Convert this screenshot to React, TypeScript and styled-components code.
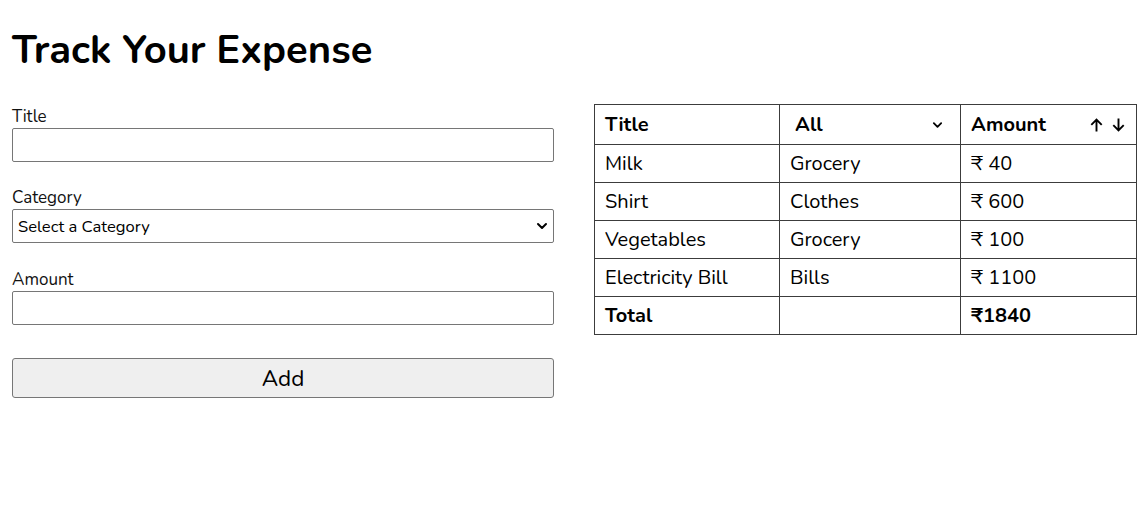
import React from "react";
import styled, { createGlobalStyle } from "styled-components";

const Global = createGlobalStyle`
  * { box-sizing: border-box; }
  body {
    margin: 0;
    background: #fff;
    color: #000;
    font-family: "Nunito", "Lato", "Noto Sans", sans-serif;
  }
`;

const Page = styled.main`
  padding: 0 11px 0 12px;
`;

const Heading = styled.h1`
  margin: 0;
  padding-top: 26px;
  font-size: 40px;
  line-height: 48px;
  font-weight: 700;
`;

const Columns = styled.div`
  display: grid;
  grid-template-columns: 542px 1fr;
  column-gap: 40px;
  margin-top: 30px;
  align-items: start;
`;

const Form = styled.form`
  display: flex;
  flex-direction: column;
`;

const Field = styled.div<{ $gap: number }>`
  display: flex;
  flex-direction: column;
  margin-bottom: ${(p) => p.$gap}px;
`;

const Label = styled.label`
  font-size: 17px;
  line-height: 22px;
  margin-top: 2px;
  color: #111;
`;

const TextInput = styled.input`
  height: 34px;
  border: 1px solid #767676;
  border-radius: 2px;
  font: inherit;
  padding: 0 6px;
  background: #fff;
`;

const SelectWrap = styled.div`
  position: relative;
  display: flex;
`;

const Select = styled.select`
  flex: 1;
  height: 34px;
  border: 1px solid #767676;
  border-radius: 2px;
  font-family: inherit;
  font-size: 16.6px;
  padding: 0 30px 0 5px;
  background: #fff;
  color: #000;
  appearance: none;
`;

const Chevron = styled.svg<{ $right: number }>`
  position: absolute;
  right: ${(p) => p.$right}px;
  top: 50%;
  transform: translateY(-50%);
  pointer-events: none;
`;

const AddButton = styled.button`
  margin-top: 10px;
  height: 40px;
  border: 1px solid #767676;
  border-radius: 3px;
  background: #efefef;
  font-family: inherit;
  font-size: 22.5px;
  color: #000;
`;

const Table = styled.table`
  width: 100%;
  border-collapse: collapse;
  border: 1px solid #3c3c3c;
`;

const HeadCell = styled.th<{ $w?: number }>`
  border: 1px solid #3c3c3c;
  height: 40px;
  padding: 0 10px;
  text-align: left;
  font-size: 20px;
  font-weight: 700;
  ${(p) => (p.$w ? `width: ${p.$w}px;` : "")}
`;

const HeadFlex = styled.div`
  display: flex;
  justify-content: space-between;
  align-items: center;
`;

const HeadSelectWrap = styled.div`
  position: relative;
  display: flex;
`;

const HeadSelect = styled.select`
  flex: 1;
  border: none;
  background: transparent;
  font-family: inherit;
  font-size: 20px;
  font-weight: 700;
  color: #000;
  padding: 2px 24px 2px 5px;
  appearance: none;
`;

const Arrows = styled.span`
  display: flex;
  gap: 9px;
  margin-right: 1px;
  align-items: center;
`;

const Cell = styled.td<{ $bold?: boolean }>`
  border: 1px solid #3c3c3c;
  height: 38px;
  padding: 0 10px;
  font-size: 20px;
  font-weight: ${(p) => (p.$bold ? 700 : 400)};
`;

const rows = [
  { title: "Milk", category: "Grocery", amount: 40 },
  { title: "Shirt", category: "Clothes", amount: 600 },
  { title: "Vegetables", category: "Grocery", amount: 100 },
  { title: "Electricity Bill", category: "Bills", amount: 1100 },
];

const ChevronIcon = ({ size, right }: { size: number; right: number }) => (
  <Chevron $right={right} width={size} height={size} viewBox="0 0 12 12">
    <path d="M2 4 L6 8 L10 4" fill="none" stroke="#000" strokeWidth="2" strokeLinecap="round" strokeLinejoin="round" />
  </Chevron>
);

const ArrowIcon = ({ down }: { down?: boolean }) => (
  <svg width="13" height="14" viewBox="0 0 13 14" style={down ? { transform: "rotate(180deg)" } : undefined}>
    <path d="M6.5 13.5 V1.6 M1.3 6.8 L6.5 1.6 L11.7 6.8" fill="none" stroke="#000" strokeWidth="1.9" strokeLinejoin="miter" />
  </svg>
);

export default function App() {
  const total = rows.reduce((s, r) => s + r.amount, 0);
  return (
    <Page>
      <Global />
      <Heading>Track Your Expense</Heading>
      <Columns>
        <Form onSubmit={(e) => e.preventDefault()}>
          <Field $gap={23}>
            <Label htmlFor="title">Title</Label>
            <TextInput id="title" type="text" />
          </Field>
          <Field $gap={24}>
            <Label htmlFor="category">Category</Label>
            <SelectWrap>
              <Select id="category" defaultValue="">
                <option value="" hidden>Select a Category</option>
                <option>Grocery</option>
                <option>Clothes</option>
                <option>Bills</option>
                <option>Education</option>
                <option>Medicine</option>
              </Select>
              <ChevronIcon size={12} right={6} />
            </SelectWrap>
          </Field>
          <Field $gap={23}>
            <Label htmlFor="amount">Amount</Label>
            <TextInput id="amount" type="number" />
          </Field>
          <AddButton type="submit">Add</AddButton>
        </Form>
        <Table>
          <thead>
            <tr>
              <HeadCell $w={185}>Title</HeadCell>
              <HeadCell $w={181}>
                <HeadSelectWrap>
                  <HeadSelect defaultValue="All">
                    <option>All</option>
                    <option>Grocery</option>
                    <option>Clothes</option>
                    <option>Bills</option>
                  </HeadSelect>
                  <ChevronIcon size={11} right={7} />
                </HeadSelectWrap>
              </HeadCell>
              <HeadCell>
                <HeadFlex>
                  <span>Amount</span>
                  <Arrows>
                    <ArrowIcon />
                    <ArrowIcon down />
                  </Arrows>
                </HeadFlex>
              </HeadCell>
            </tr>
          </thead>
          <tbody>
            {rows.map((r) => (
              <tr key={r.title}>
                <Cell>{r.title}</Cell>
                <Cell>{r.category}</Cell>
                <Cell>₹ {r.amount}</Cell>
              </tr>
            ))}
            <tr>
              <Cell $bold>Total</Cell>
              <Cell />
              <Cell $bold>₹{total}</Cell>
            </tr>
          </tbody>
        </Table>
      </Columns>
    </Page>
  );
}
